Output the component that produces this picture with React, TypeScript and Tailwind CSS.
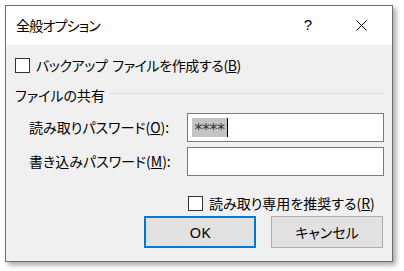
import React from "react";

const font = "font-['Noto_Sans_CJK_JP','Noto_Sans',sans-serif] [font-feature-settings:'palt']";

function Box() {
  return <div className="h-[15px] w-[15px] min-w-[15px] shrink-0 border border-[#333333] bg-white" />;
}

export default function App() {
  return (
    <div className={`h-[271px] w-[404px] overflow-hidden bg-white pl-[5px] pt-[5px] text-black ${font}`}>
      <div className="flex h-[257px] w-[388px] flex-col border border-[#707070] bg-[#f0f0f0] shadow-[3px_3px_5px_rgba(0,0,0,0.35)]">
        <div className="flex h-[39px] shrink-0 items-center bg-white pl-[10px] text-[14px]">
          <span className="flex-1 tracking-[-0.8px]">全般オプション</span>
          <span className="mr-[44px] text-[15px] font-['Liberation_Sans',sans-serif]">?</span>
          <svg width="11" height="11" viewBox="0 0 11 11" className="mr-[25px]">
            <path d="M0.5 0.5L10.5 10.5M10.5 0.5L0.5 10.5" stroke="#000" strokeWidth="1" />
          </svg>
        </div>

        <div className="flex flex-1 flex-col text-[14px]">
          <div className="mt-[10px] flex h-[20px] items-center gap-[6px] pl-[9px]">
            <Box />
            <span className="tracking-[-0.4px]">
              バックアップ<span className="inline-block w-[5px]" />ファイルを作成する(<u>B</u>)
            </span>
          </div>

          <div className="mt-[10px] flex h-[20px] items-center gap-[4px] pl-[9px] pr-[8px]">
            <span>ファイルの共有</span>
            <span className="mb-[4px] h-px flex-1 bg-[#dcdcdc]" />
          </div>

          <div className="mt-[8px] flex items-center pl-[23px]">
            <span className="w-[158px]">読み取りパスワード(<u>O</u>):</span>
            <div className="flex h-[29px] w-[197px] items-center border border-[#7a7a7a] bg-white pl-[4px]">
              <span className="flex h-[19px] w-[35px] items-center justify-center bg-[#c4c4c4] pt-[5px] text-[16px] leading-none tracking-[-0.5px] font-['DejaVu_Sans',sans-serif] text-[#333]">
                ****
              </span>
              <span className="h-[19px] w-px bg-black" />
            </div>
          </div>

          <div className="mt-[5px] flex items-center pl-[23px]">
            <span className="w-[158px]">書き込みパスワード(<u>M</u>):</span>
            <div className="h-[29px] w-[197px] border border-[#7a7a7a] bg-white" />
          </div>

          <div className="mt-[18px] flex h-[18px] items-center gap-[6px] pl-[182px]">
            <Box />
            <span>読み取り専用を推奨する(<u>R</u>)</span>
          </div>

          <div className="mt-[4px] flex gap-[15px] pl-[138px]">
            <button className="flex h-[32px] w-[112px] items-center justify-center border-2 border-[#0078d7] bg-[#e1e1e1] text-[15px] font-['Noto_Sans',sans-serif]">
              OK
            </button>
            <button className="flex h-[32px] w-[112px] items-center justify-center border border-[#adadad] bg-[#e1e1e1] text-[14px]">
              キャンセル
            </button>
          </div>
        </div>
      </div>
    </div>
  );
}
